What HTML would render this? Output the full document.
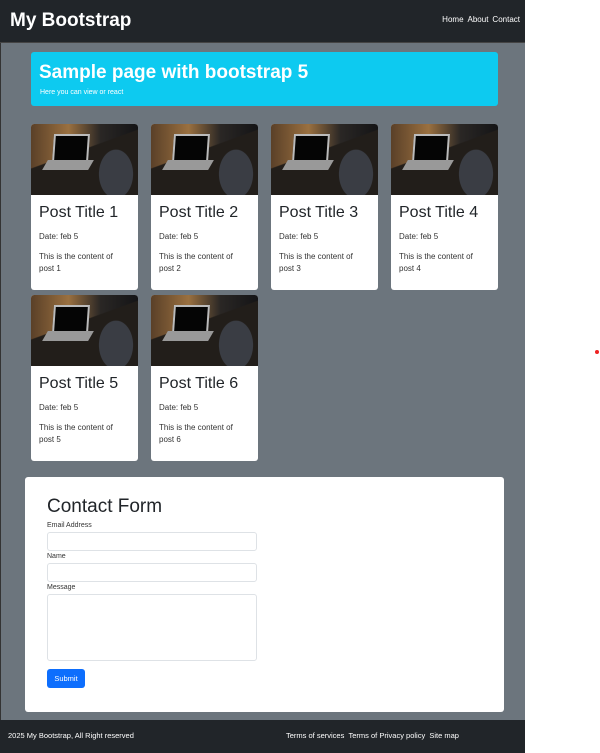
<!DOCTYPE html><html><head><style>
*{box-sizing:border-box;margin:0;padding:0}
body{width:600px;height:753px;background:#fff;font-family:"Liberation Sans",sans-serif;position:relative;overflow:hidden}
.wrap{position:absolute;left:0;top:0;width:525px;height:753px;background:#6c757d;box-shadow:inset 1px 0 0 #333}
.nav{position:absolute;left:0;top:0;width:525px;height:43px;background:#212529;border-bottom:1px solid #444}
.brand{position:absolute;left:10px;top:10px;color:#fff;font-size:19px;font-weight:bold}
.links{position:absolute;right:5px;top:15px;color:#fff;font-size:8px}
.links span{margin-left:4px}
.jumbo{position:absolute;left:31px;top:52px;width:467px;height:54px;background:#0dcaf0;border-radius:3px;color:#fff}
.jumbo h1{position:absolute;left:8px;top:10px;font-size:19px;font-weight:bold}
.jumbo p{position:absolute;left:9px;top:37px;font-size:7px}
.card{position:absolute;width:107px;height:166px;background:#fff;border-radius:3px;overflow:hidden}
.img{height:71px;background:radial-gradient(ellipse 28px 40px at 85px 50px,#3a3d44 60%,transparent 62%),linear-gradient(160deg,transparent 40%,#221e1a 41%),linear-gradient(90deg,#5a4028,#9a7040 35%,#2a2725 65%,#141416);position:relative}
.img:before{content:"";position:absolute;left:22px;top:10px;width:32px;height:24px;background:#050505;border:2px solid #bbb;transform:skewX(-4deg)}
.img:after{content:"";position:absolute;left:14px;top:36px;width:46px;height:10px;background:#999;transform:skewX(-30deg)}
.card h3{position:absolute;left:8px;top:80px;font-size:16px;font-weight:normal;color:#212529}
.card .d{position:absolute;left:8px;top:108px;font-size:8px;color:#333}
.card .c{position:absolute;left:8px;top:127px;font-size:8px;color:#333;line-height:12px;width:88px}
.form{position:absolute;left:25px;top:477px;width:479px;height:235px;background:#fff;border-radius:3px}
.form h2{position:absolute;left:22px;top:19px;font-size:19px;font-weight:normal;color:#212529}
.lbl{position:absolute;left:22px;font-size:7px;color:#333}
.in{position:absolute;left:22px;width:210px;border:1px solid #dee2e6;border-radius:3px}
.btn{position:absolute;left:22px;top:192px;width:38px;height:19px;background:#0d6efd;color:#fff;font-size:7.5px;border-radius:3px;text-align:center;line-height:19px}
.foot{position:absolute;left:0;top:720px;width:525px;height:33px;background:#212529;color:#fff;font-size:7.5px}
</style></head><body>
<div class="wrap">
<div class="nav"><div class="brand">My Bootstrap</div><div class="links"><span>Home</span><span>About</span><span>Contact</span></div></div>
<div class="jumbo"><h1>Sample page with bootstrap 5</h1><p>Here you can view or react</p></div>
<div class="card" style="left:31px;top:124px"><div class="img"></div><h3>Post Title 1</h3><div class="d">Date: feb 5</div><div class="c">This is the content of post 1</div></div>
<div class="card" style="left:151px;top:124px"><div class="img"></div><h3>Post Title 2</h3><div class="d">Date: feb 5</div><div class="c">This is the content of post 2</div></div>
<div class="card" style="left:271px;top:124px"><div class="img"></div><h3>Post Title 3</h3><div class="d">Date: feb 5</div><div class="c">This is the content of post 3</div></div>
<div class="card" style="left:391px;top:124px"><div class="img"></div><h3>Post Title 4</h3><div class="d">Date: feb 5</div><div class="c">This is the content of post 4</div></div>
<div class="card" style="left:31px;top:295px"><div class="img"></div><h3>Post Title 5</h3><div class="d">Date: feb 5</div><div class="c">This is the content of post 5</div></div>
<div class="card" style="left:151px;top:295px"><div class="img"></div><h3>Post Title 6</h3><div class="d">Date: feb 5</div><div class="c">This is the content of post 6</div></div>
<div class="form"><h2>Contact Form</h2>
<div class="lbl" style="top:45px">Email Address</div><div class="in" style="top:55px;height:19px"></div>
<div class="lbl" style="top:76px">Name</div><div class="in" style="top:86px;height:19px"></div>
<div class="lbl" style="top:107px">Message</div><div class="in" style="top:117px;height:67px"></div>
<div class="btn">Submit</div></div>
<div class="foot"><span style="position:absolute;left:8px;top:11px">2025 My Bootstrap, All Right reserved</span><span style="position:absolute;left:286px;top:11px">Terms of services &nbsp;Terms of Privacy policy &nbsp;Site map</span></div>
</div>
<div style="position:absolute;left:595px;top:350px;width:4px;height:4px;border-radius:50%;background:#e22"></div>
</body></html>
